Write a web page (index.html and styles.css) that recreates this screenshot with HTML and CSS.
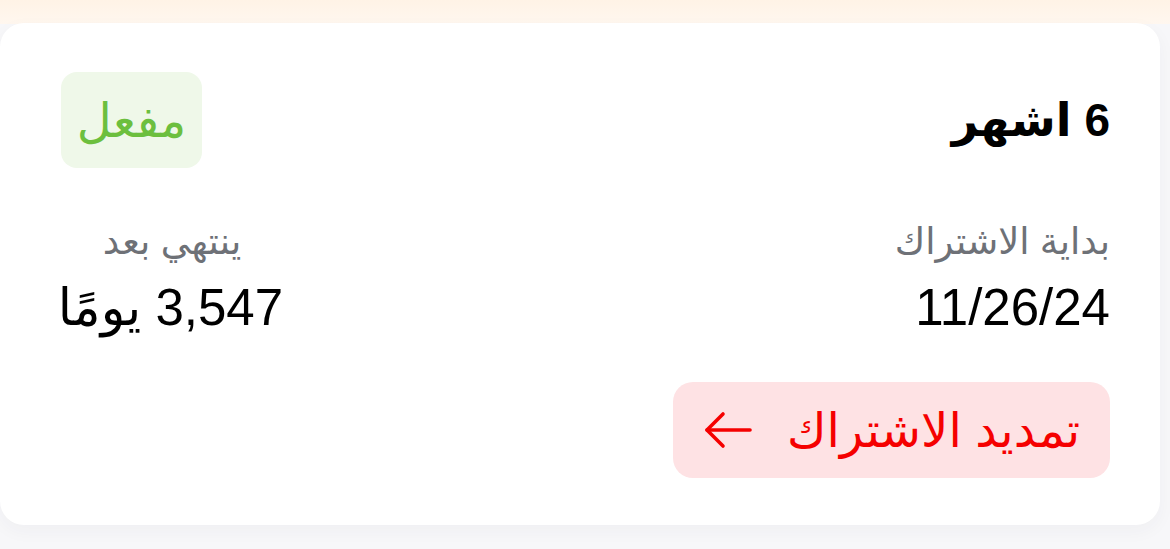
FILE: index.html
```html
<!DOCTYPE html>
<html lang="ar" dir="rtl">
<head>
    <meta charset="UTF-8">
    <meta name="viewport" content="width=device-width, initial-scale=1.0">
    <title>الاشتراك</title>
    <link rel="stylesheet" href="styles.css">
</head>
<body>
    <div class="top-strip"></div>

    <div class="card">
        <div class="card-header">
            <h2 class="plan-name">6 اشهر</h2>
            <span class="status-badge">مفعل</span>
        </div>

        <div class="info-grid">
            <div class="info-item">
                <div class="info-label">بداية الاشتراك</div>
                <div class="info-value">11/26/24</div>
            </div>
            <div class="info-item centered">
                <div class="info-label">ينتهي بعد</div>
                <div class="info-value">3,547 يومًا</div>
            </div>
        </div>

        <button class="renew-btn">
            <span>تمديد الاشتراك</span>
            <svg width="50" height="38" viewBox="0 0 50 38" fill="none" stroke="currentColor" stroke-width="3.6" stroke-linecap="round" stroke-linejoin="round">
                <path d="M47 19H4"/>
                <path d="M20 3L4 19l16 16"/>
            </svg>
        </button>
    </div>
</body>
</html>
```

FILE: styles.css
```css
/* General */
body {
    margin: 0;
    background: #f7f7f9;
    font-family: 'Liberation Sans', 'DejaVu Sans', sans-serif;
    color: #000000;
    height: 549px;
    overflow: hidden;
}

.top-strip {
    height: 24px;
    background: linear-gradient(to bottom, #fff3e6, #fff7ef);
}

/* Card */
.card {
    background: #ffffff;
    border-radius: 24px;
    margin-right: 10px;
    margin-top: -1px;
    padding: 49px 50px 47px 61px;
    box-shadow: 0 6px 18px rgba(40, 40, 80, 0.04);
}

.card-header {
    display: flex;
    justify-content: space-between;
    align-items: center;
}

.plan-name {
    margin: 0;
    font-size: 46px;
    font-weight: bold;
}

.status-badge {
    background: #eff8e9;
    color: #6cbf3e;
    font-size: 48px;
    border-radius: 16px;
    height: 96px;
    width: 141px;
    display: flex;
    justify-content: center;
    align-items: center;
}

/* Info */
.info-grid {
    display: grid;
    grid-template-columns: 1fr 222px;
    margin-top: 50px;
}

.info-item.centered {
    text-align: center;
    white-space: nowrap;
}

.info-label {
    color: #6e7177;
    font-size: 37px;
    line-height: 48px;
}

.info-value {
    font-size: 51px;
    line-height: 60px;
    margin-top: 12px;
}

/* Button */
.renew-btn {
    margin-top: 44px;
    display: inline-flex;
    align-items: center;
    gap: 34px;
    height: 96px;
    padding: 0 30px 0 30px;
    border: none;
    border-radius: 20px;
    background: #fee2e4;
    color: #f50000;
    font-family: inherit;
    font-size: 48px;
    cursor: pointer;
}
```
